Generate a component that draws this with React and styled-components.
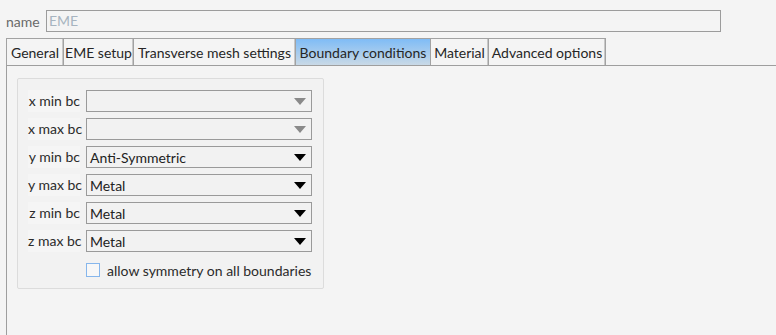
import React from 'react';
import styled, { createGlobalStyle } from 'styled-components';

const GlobalStyle = createGlobalStyle`
  html, body {
    margin: 0;
    padding: 0;
    background: #f4f4f4;
    font-family: Lato, "Liberation Sans", sans-serif;
    font-size: 14px;
    color: #2b2b2b;
  }
`;

const Page = styled.div`
  height: 335px;
  overflow: hidden;
  padding-top: 10px;
  box-sizing: border-box;
`;

const NameRow = styled.div`
  display: flex;
  align-items: center;
  gap: 6px;
  padding-left: 6px;
  height: 22px;

  label {
    color: #6a6a6a;
    width: 34px;
  }
`;

const NameInput = styled.div`
  width: 671px;
  height: 20px;
  border: 1px solid #9c9c9c;
  padding-left: 2px;
  color: #a7b4c0;
  line-height: 20px;
`;

const TabBar = styled.div`
  display: flex;
  margin: 6px 0 0 6px;
  height: 27px;
`;

const Tab = styled.div`
  width: ${({ w }) => w}px;
  box-sizing: border-box;
  border: 1px solid #a2a2a2;
  border-bottom: none;
  margin-right: -1px;
  display: flex;
  align-items: center;
  justify-content: center;
  white-space: nowrap;
  background: ${({ active }) =>
    active ? 'linear-gradient(#7fbcf6, #c9d9e6)' : '#f4f4f4'};
  box-shadow: ${({ active }) => (active ? 'none' : 'inset -1px 0 0 #c8c8c8')};
  color: #262626;
`;

const Pane = styled.div`
  margin-left: 6px;
  border-top: 1px solid #9e9e9e;
  border-left: 1px solid #9e9e9e;
  padding: 12px 0 0 10px;
  height: 300px;
`;

const Group = styled.div`
  width: 307px;
  height: 211px;
  box-sizing: border-box;
  border: 1px solid #dcdcdc;
  border-radius: 2px;
  background: #f2f2f2;
  padding: 11px 0 0 10px;
`;

const Grid = styled.div`
  display: grid;
  grid-template-columns: 52px 226px;
  column-gap: 6px;
  row-gap: 6px;
`;

const Label = styled.div`
  height: 22px;
  line-height: 22px;
  text-align: right;
  background: #f5f5f5;
  color: #2b2b2b;
  white-space: nowrap;
`;

const Combo = styled.div`
  height: 22px;
  box-sizing: border-box;
  border: 1px solid #9a9a9a;
  display: flex;
  align-items: center;
  justify-content: space-between;
  padding: 0 5px 0 3px;
  color: #222;
`;

const Arrow = styled.span`
  width: 0;
  height: 0;
  border-left: 6px solid transparent;
  border-right: 6px solid transparent;
  border-top: 7px solid ${({ disabled }) => (disabled ? '#8a8a8a' : '#000')};
`;

const CheckRow = styled.div`
  grid-column: 2;
  display: flex;
  align-items: center;
  gap: 7px;
  margin-top: 2px;
  height: 20px;
`;

const Box = styled.span`
  width: 12px;
  height: 12px;
  border: 1px solid #86b6ec;
  background: #f7f7f7;
`;

const tabs = [
  { name: 'General', w: 58 },
  { name: 'EME setup', w: 71 },
  { name: 'Transverse mesh settings', w: 163 },
  { name: 'Boundary conditions', w: 136, active: true },
  { name: 'Material', w: 59 },
  { name: 'Advanced options', w: 118 },
];

const rows = [
  { label: 'x min bc', value: '', disabled: true },
  { label: 'x max bc', value: '', disabled: true },
  { label: 'y min bc', value: 'Anti-Symmetric' },
  { label: 'y max bc', value: 'Metal' },
  { label: 'z min bc', value: 'Metal' },
  { label: 'z max bc', value: 'Metal' },
];

const App = () => (
  <Page>
    <GlobalStyle />
    <NameRow>
      <label>name</label>
      <NameInput>EME</NameInput>
    </NameRow>
    <TabBar>
      {tabs.map(t => (
        <Tab key={t.name} w={t.w} active={t.active}>
          {t.name}
        </Tab>
      ))}
    </TabBar>
    <Pane>
      <Group>
        <Grid>
          {rows.map(r => (
            <React.Fragment key={r.label}>
              <Label>{r.label}</Label>
              <Combo>
                <span>{r.value}</span>
                <Arrow disabled={r.disabled} />
              </Combo>
            </React.Fragment>
          ))}
          <CheckRow>
            <Box />
            <span>allow symmetry on all boundaries</span>
          </CheckRow>
        </Grid>
      </Group>
    </Pane>
  </Page>
);

export default App;
